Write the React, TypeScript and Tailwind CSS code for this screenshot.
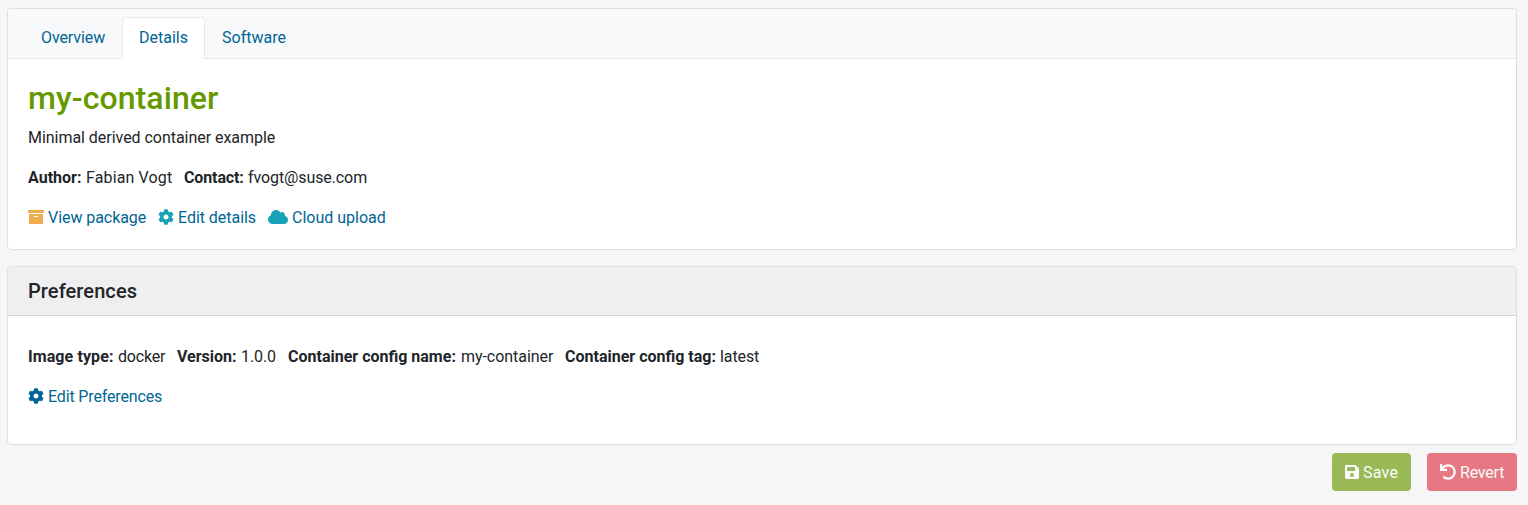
import React from "react";
import { FaCog, FaCloud, FaSave, FaUndo } from "react-icons/fa";

const tabs = [
  { name: "Overview", className: "w-[98px] border-transparent tracking-[-0.1px]" },
  { name: "Details", className: "w-[83px] rounded-t border-[#e6e8ea] bg-white" },
  { name: "Software", className: "border-transparent" },
];

function ArchiveIcon() {
  return (
    <svg width="16" height="16" viewBox="0 0 16 16" fill="#f0ad4e" aria-hidden="true">
      <path d="M.6 1h14.8a.6.6 0 0 1 .6.6V4H0V1.6A.6.6 0 0 1 .6 1Z" />
      <path fillRule="evenodd" d="M1 5h14v9.2a.8.8 0 0 1-.8.8H1.8a.8.8 0 0 1-.8-.8ZM6 7v1h4V7Z" />
    </svg>
  );
}

function Field({ label, value, className, labelClass }: { label: string; value: string; className?: string; labelClass: string }) {
  return (
    <span className="flex">
      <strong className={`shrink-0 font-bold whitespace-nowrap ${labelClass}`}>{label}:</strong>
      <span className={`whitespace-nowrap ${className ?? ""}`}>{value}</span>
    </span>
  );
}

export default function App() {
  return (
    <div className="min-h-screen bg-[#f6f6f6] pt-2 pr-[11px] pl-[7px] font-['Roboto',sans-serif] text-base leading-6 text-[#212529]">
      <section className="h-[242px] rounded border border-[#dfdfdf] bg-white">
        <nav className="flex h-[50px] items-end rounded-t border-b border-[#e6e8ea] bg-[#f8f9fb] pl-4">
          {tabs.map((t) => (
            <a
              key={t.name}
              href="#"
              className={`-mb-px h-[42px] border border-b-0 px-4 pt-2 whitespace-nowrap text-[#006594] ${t.className}`}
            >
              {t.name}
            </a>
          ))}
        </nav>
        <div className="p-5">
          <h1 className="mb-[9px] text-[32px] leading-[38.4px] font-medium tracking-[0.08px] text-[#690]">my-container</h1>
          <p className="mb-4 tracking-[-0.04px]">Minimal derived container example</p>
          <p className="mb-4 flex">
            <Field label="Author" value="Fabian Vogt" labelClass="w-[58px]" className="w-[98px] tracking-[0.13px]" />
            <Field label="Contact" value="fvogt@suse.com" labelClass="w-[64px] tracking-[-0.12px]" className="tracking-[-0.1px]" />
          </p>
          <div className="flex text-[#006594]">
            <a href="#" className="flex w-[130px] gap-1 tracking-[-0.06px]"><span className="pt-[3px]"><ArchiveIcon /></span>View package</a>
            <a href="#" className="flex w-[110px] gap-1 tracking-[-0.04px]"><FaCog className="mt-[3px] text-[#17a2b8]" />Edit details</a>
            <a href="#" className="flex gap-1"><FaCloud className="mt-[3px] h-4 w-5 text-[#17a2b8]" />Cloud upload</a>
          </div>
        </div>
      </section>
      <section className="mt-4 h-[179px] rounded border border-[#dfdfdf] bg-white">
        <header className="h-[49px] rounded-t border-b border-[#d3d3d3] bg-[#efefef] px-5 py-3">
          <h2 className="text-xl leading-6 font-medium tracking-[0.09px]">Preferences</h2>
        </header>
        <div className="px-5 pt-[29px]">
          <p className="mb-4 flex">
            <Field label="Image type" value="docker" labelClass="w-[90px] tracking-[0.09px]" className="w-[59px] tracking-[-0.2px]" />
            <Field label="Version" value="1.0.0" labelClass="w-[64px]" className="w-[47px] tracking-[-0.1px]" />
            <Field label="Container config name" value="my-container" labelClass="w-[173px]" className="w-[104px] tracking-[-0.05px]" />
            <Field label="Container config tag" value="latest" labelClass="w-[155px]" className="tracking-[-0.1px]" />
          </p>
          <a href="#" className="flex gap-1 tracking-[-0.15px] text-[#006594]"><FaCog className="mt-[3px]" />Edit Preferences</a>
        </div>
      </section>
      <div className="mt-[9px] flex justify-end gap-4 text-white">
        <button disabled className="-mt-px flex h-[38px] w-[79px] gap-1 rounded bg-[#690] pt-2 pl-[13px] tracking-[0.25px] opacity-65"><FaSave className="mt-[3px] h-4 w-3.5" />Save</button>
        <button disabled className="-mt-px flex h-[38px] w-[90px] gap-1 rounded bg-[#dc3545] pt-2 pl-[13px] tracking-[-0.2px] opacity-65"><FaUndo className="mt-[3px]" />Revert</button>
      </div>
    </div>
  );
}
